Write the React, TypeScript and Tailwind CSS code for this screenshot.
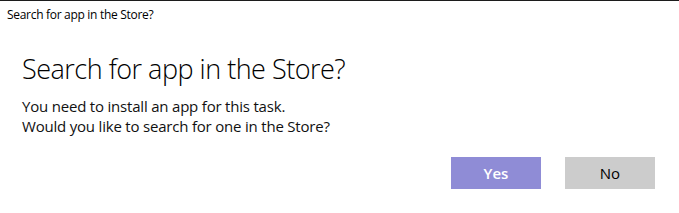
import React from "react";

export default function App() {
  return (
    <div
      className="w-[679px] h-[213px] bg-white border-t border-[#1c1c1c] overflow-hidden flex flex-col text-black"
      style={{ fontFamily: '"Open Sans", "Noto Sans", sans-serif' }}
    >
      <div className="h-[31px] pl-[7px] pt-[6px] text-[12px] leading-[16px] tracking-[-0.3px]">
        Search for app in the Store?
      </div>
      <div className="pl-[22px] pt-[19px]">
        <div className="text-[27px] leading-[35px] tracking-[-0.5px] font-light text-black">
          Search for app in the Store?
        </div>
        <div className="mt-[10px] text-[15px] leading-[20px] tracking-[-0.2px] text-[#111]">
          <div>You need to install an app for this task.</div>
          <div>Would you like to search for one in the Store?</div>
        </div>
      </div>
      <div className="flex justify-end gap-[24px] pr-[24px] mt-[21px]">
        <button className="w-[90px] h-[32px] bg-[#8f8cd6] text-white text-[15px] font-semibold">
          Yes
        </button>
        <button className="w-[90px] h-[32px] bg-[#cccccc] text-black text-[15px]">
          No
        </button>
      </div>
    </div>
  );
}
